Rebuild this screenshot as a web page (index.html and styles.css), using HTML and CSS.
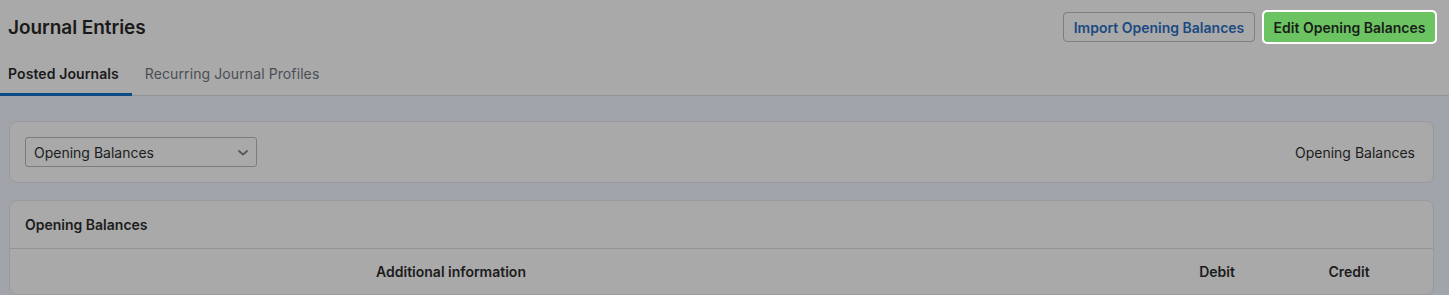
FILE: index.html
```html
<!DOCTYPE html>
<html lang="en">
<head>
<meta charset="utf-8">
<title>Journal Entries</title>
<link rel="stylesheet" href="styles.css">
</head>
<body>
<header class="page-header">
  <div class="title-row">
    <h1 class="title">Journal Entries</h1>
    <div class="actions">
      <button class="btn btn-outline">Import Opening Balances</button>
      <button class="btn btn-green">Edit Opening Balances</button>
    </div>
  </div>
  <nav class="tabs">
    <div class="tab active">Posted Journals</div>
    <div class="tab">Recurring Journal Profiles</div>
  </nav>
</header>
<main class="content">
  <section class="card filter-card">
    <div class="select">
      <span>Opening Balances</span>
      <svg class="chev" width="10" height="6" viewBox="0 0 10 6"><path d="M1 1l4 3.6L9 1" fill="none" stroke="#50565c" stroke-width="1.8" stroke-linecap="round" stroke-linejoin="round"/></svg>
    </div>
    <div class="filter-label">Opening Balances</div>
  </section>
  <section class="card table-card">
    <div class="card-head">Opening Balances</div>
    <div class="thead">
      <div class="th">Additional information</div>
      <div class="th spacer"></div>
      <div class="th">Debit</div>
      <div class="th">Credit</div>
      <div class="th spacer"></div>
    </div>
  </section>
</main>
</body>
</html>
```
FILE: styles.css
```css
* { box-sizing: border-box; }
html, body { margin: 0; padding: 0; }
body {
  font-family: Inter, "Noto Sans", sans-serif;
  background: #a1a5ab;
  color: #1c1c1c;
  height: 295px;
  overflow: hidden;
}
.page-header {
  background: #a9a9a9;
  border-bottom: 1px solid #909398;
}
.title-row {
  display: flex;
  justify-content: space-between;
  align-items: center;
  padding: 12px 14px 0 8px;
  height: 42px;
}
.title {
  margin: 0;
  font-size: 19px;
  font-weight: 600;
  color: #1a1a1a;
  letter-spacing: -0.05px;
}
.actions { display: flex; gap: 9px; }
.btn {
  font-family: inherit;
  font-size: 14px;
  font-weight: 600;
  height: 30px;
  border-radius: 4px;
  padding: 0;
  white-space: nowrap;
  cursor: pointer;
}
.btn-outline {
  background: #a9a9a9;
  border: 1px solid #7c7e80;
  color: #1b4a82;
  width: 192px;
}
.btn-green {
  background: #6bc461;
  border: 1px solid #6bc461;
  color: #1b1d1b;
  width: 171px;
  box-shadow: 0 0 0 2px #ffffff;
  border-radius: 3px;
}
.tabs {
  display: flex;
  margin-top: 12px;
  height: 41px;
}
.tab {
  height: 42px;
  margin-bottom: -1px;
  font-size: 14px;
  line-height: 39px;
  color: #4a4f55;
  padding: 0 12px 0 13px;
  border-bottom: 3px solid transparent;
  letter-spacing: 0.1px;
}
.tab.active {
  color: #1a1a1a;
  font-weight: 600;
  padding: 0 13px 0 8px;
  border-bottom-color: #0e4a84;
}
.content {
  padding: 25px 15px 0 9px;
  display: flex;
  flex-direction: column;
  gap: 17px;
}
.card {
  background: #a9a9a9;
  border: 1px solid #9a9a9c;
  border-radius: 8px;
}
.filter-card {
  height: 62px;
  display: flex;
  align-items: center;
  justify-content: space-between;
  padding: 0 18px 0 15px;
}
.select {
  width: 232px;
  height: 30px;
  border: 1px solid #7b7c7e;
  border-radius: 3px;
  display: flex;
  align-items: center;
  justify-content: space-between;
  padding: 0 8px 0 8px;
  font-size: 14px;
  color: #1c1c1c;
}
.chev { margin-top: 1px; }
.filter-label { font-size: 14px; color: #1c1c1c; }
.card-head {
  height: 48px;
  display: flex;
  align-items: center;
  padding: 0 15px;
  font-size: 14px;
  font-weight: 600;
  color: #1c1c1c;
  border-bottom: 1px solid #929396;
}
.thead {
  display: grid;
  grid-template-columns: 882px 1fr 132px 132px 18px;
  height: 45px;
  align-items: center;
}
.th {
  text-align: center;
  font-size: 14px;
  font-weight: 600;
  color: #1c1c1c;
}
```
